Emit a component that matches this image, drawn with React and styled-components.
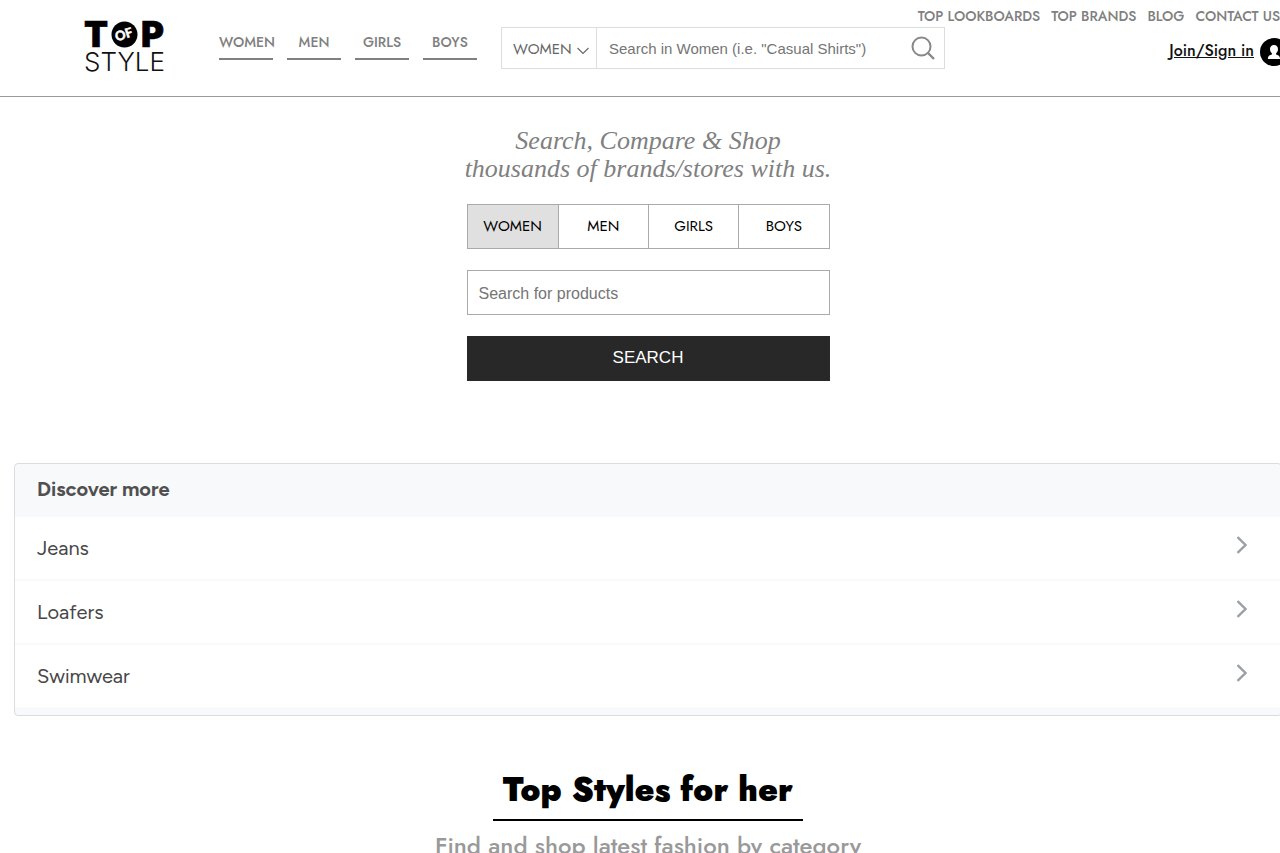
import React, { useState } from 'react';
import styled, { createGlobalStyle } from 'styled-components';

const JOST = '"Jost", Lato, sans-serif';
const ARIAL = 'Arial, "Liberation Sans", sans-serif';

const GlobalStyle = createGlobalStyle`
  * {
    box-sizing: border-box;
  }
  body {
    margin: 0;
    background: #fff;
    overflow-x: hidden;
  }
  input::placeholder {
    color: #757575;
    opacity: 1;
  }
`
// the page is 16px wider than the window
const Page = styled.div`
  width: calc(100% + 16px);
  font-family: ${JOST};
`
const Header = styled.header`
  display: grid;
  grid-template-columns: 84px 1fr;
  grid-template-rows: 27px 69px;
  column-gap: 52px;
  padding: 0 8px 0 83px;
  border-bottom: 1px solid #999;
`
const LogoLink = styled.a`
  grid-row: 1 / 3;
  padding-top: 12px;
`
const LogoSvg = styled.svg`
  display: block;
  width: 84px;
  height: 70px;
`
const TopLinks = styled.nav`
  display: flex;
  justify-content: flex-end;
  gap: 11px;
  padding: 6px 8px 0 0;
`
const TopLink = styled.a`
  color: #808080;
  font-size: 14px;
  font-weight: 500;
  line-height: 20px;
  text-decoration: none;
  white-space: nowrap;
`
const Bar = styled.div`
  display: flex;
  align-items: flex-start;
`
const MainNav = styled.nav`
  display: flex;
  gap: 14px;
  margin-right: 24px;
`
const NavLink = styled.a`
  width: 54px;
  border-bottom: 2px solid #808080;
  color: #808080;
  font-size: 14px;
  font-weight: 500;
  line-height: 31px;
  text-align: center;
  text-decoration: none;
`
const SearchBox = styled.form`
  display: flex;
  flex: 0 1 444px;
  height: 42px;
  border: 1px solid #ddd;
`
const Department = styled.label`
  position: relative;
  flex: none;
  width: 95px;
  border-right: 1px solid #ddd;
  svg {
    position: absolute;
    right: 7px;
    top: 19px;
    pointer-events: none;
  }
`
const DepartmentSelect = styled.select`
  width: 100%;
  height: 100%;
  padding: 2px 0 0 11px;
  border: 0;
  appearance: none;
  background: transparent;
  color: #666;
  font-family: ${JOST};
  font-size: 15px;
`
const SearchInput = styled.input`
  flex: 1;
  min-width: 0;
  padding: 0 12px;
  border: 0;
  background: transparent;
  font-family: ${ARIAL};
  font-size: 15px;
`
const SearchIcon = styled.button`
  padding: 0 9px 0 0;
  border: 0;
  background: transparent;
  svg {
    display: block;
  }
`
const Account = styled.div`
  display: flex;
  align-items: flex-start;
  gap: 6px;
  margin: 11px 0 0 auto;
`
const JoinLink = styled.a`
  color: #111;
  font-size: 16px;
  font-weight: 500;
  line-height: 26px;
  white-space: nowrap;
`
const Hero = styled.section`
  display: flex;
  flex-direction: column;
  align-items: center;
  padding: 30px 0 82px;
`
const Slogan = styled.h1`
  margin: 0 0 21px;
  color: #808080;
  font-family: "Liberation Serif", serif;
  font-size: 26px;
  font-style: italic;
  font-weight: 400;
  line-height: 28px;
  text-align: center;
`
const HeroForm = styled.form`
  display: grid;
  gap: 21px;
  width: 363px;
`
const Tabs = styled.div`
  display: grid;
  grid-template-columns: repeat(4, 1fr);
  height: 45px;
  border: 1px solid #aaa;
`
const Tab = styled.button`
  padding: 0 0 2px;
  border: 0;
  border-left: ${props => props.$first ? '0' : '1px solid #aaa'};
  background: ${props => props.$active ? '#e0e0e0' : '#fff'};
  color: #000;
  font-family: ${JOST};
  font-size: 15px;
`
const ProductInput = styled.input`
  height: 45px;
  padding: 2px 11px 0;
  border: 1px solid #aaa;
  font-family: ${ARIAL};
  font-size: 16px;
`
const SubmitButton = styled.button`
  height: 45px;
  padding: 0 0 2px;
  border: 0;
  background: #282828;
  color: #fff;
  font-family: ${ARIAL};
  font-size: 17px;
`
const Discover = styled.section`
  margin: 0 14px;
  padding-bottom: 6px;
  border: 1px solid #dadce0;
  border-radius: 4px;
  background: #f8f9fb;
  font-family: "Google Sans", "Product Sans", Figtree, Roboto, sans-serif;
`
const DiscoverTitle = styled.h2`
  margin: 0;
  padding: 0 22px;
  color: #505050;
  font-size: 20px;
  font-weight: 700;
  line-height: 51px;
  height: 53px;
`
const DiscoverRow = styled.a`
  display: flex;
  align-items: center;
  justify-content: space-between;
  height: 64px;
  padding: 0 32px 0 22px;
  border-bottom: 2px solid #f8f9fb;
  background: #fff;
  color: #474747;
  font-size: 20px;
  text-decoration: none;
  svg {
    margin-bottom: 6px;
  }
`
const Styles = styled.section`
  display: flex;
  flex-direction: column;
  align-items: center;
  padding: 50px 0 40px;
`
const StylesTitle = styled.h2`
  margin: 0 0 6px;
  padding: 0 10px 5px;
  border-bottom: 2px solid #000;
  font-size: 33px;
  font-weight: 900;
  line-height: 48px;
`
const StylesText = styled.p`
  margin: 0;
  color: #999;
  font-size: 24px;
  font-weight: 500;
  line-height: 38px;
`

const departments = ['WOMEN', 'MEN', 'GIRLS', 'BOYS'];
const topLinks = ['TOP LOOKBOARDS', 'TOP BRANDS', 'BLOG', 'CONTACT US'];
const topics = ['Jeans', 'Loafers', 'Swimwear'];

function Logo() {
  return (
    <LogoSvg viewBox="-2 -9 84 70" role="img" aria-label="Top of Style">
      <g fontFamily="Inter, sans-serif">
        <text x="-1" y="26" fontSize="35" fontWeight="900" stroke="#000" strokeWidth=".6">T</text>
        <text x="56" y="26" fontSize="35" fontWeight="900" stroke="#000" strokeWidth=".6">P</text>
        <circle cx="39.500" cy="13.500" r="13" fill="#000" />
        <text x="39" y="18" fontFamily="Lato, sans-serif" fontSize="13" fontWeight="900" fill="#fff" stroke="#fff" strokeWidth=".4" textAnchor="middle" transform="rotate(-18 39 14)">OF</text>
        <text x="-1" y="50" fontSize="26" fontWeight="300" fill="#111">STYLE</text>
      </g>
    </LogoSvg>
  )
}

function Chevron() {
  return (
    <svg width="14" height="18" viewBox="0 0 14 18" fill="none" stroke="#9aa0a6" strokeWidth="2.4">
      <path d="M2.500 1.200L10.500 9L2.500 16.800" />
    </svg>
  )
}

function HeaderSearch() {
  return (
    <SearchBox onSubmit={e => e.preventDefault()}>
      <Department>
        <DepartmentSelect aria-label="Department">
          {departments.map(name => <option key={name}>{name}</option>)}
        </DepartmentSelect>
        <svg width="12" height="8" viewBox="0 0 12 8" fill="none" stroke="#666" strokeWidth="1.1">
          <path d="M.5 1L6 6.500L11.500 1" />
        </svg>
      </Department>
      <SearchInput aria-label="Search in Women" placeholder={'Search in Women (i.e. "Casual Shirts")'} />
      <SearchIcon aria-label="Search">
        <svg width="24" height="24" viewBox="0 0 24 24" fill="none" stroke="#888" strokeWidth="2">
          <circle cx="10.500" cy="10.500" r="9" />
          <path d="M17 17L23 23" strokeWidth="2.400" />
        </svg>
      </SearchIcon>
    </SearchBox>
  )
}

function App() {
  const [active, setActive] = useState('WOMEN');
  return (
    <Page>
      <GlobalStyle />
      <Header>
        <LogoLink href="#"><Logo /></LogoLink>
        <TopLinks>
          {topLinks.map(name => <TopLink href="#" key={name}>{name}</TopLink>)}
        </TopLinks>
        <Bar>
          <MainNav>
            {departments.map(name => <NavLink href="#" key={name}>{name}</NavLink>)}
          </MainNav>
          <HeaderSearch />
          <Account>
            <JoinLink href="#">Join/Sign in</JoinLink>
            <svg width="28" height="28" viewBox="0 0 28 28">
              <circle cx="14" cy="14" r="14" fill="#000" />
              <path d="M14 7c-2.600 0-4 2-4 4.200 0 1.700.8 3.200 1.900 4v1.300c-2 .6-4 1.400-4 4.500h12.200c0-3.100-2-3.900-4-4.500v-1.300c1.100-.8 1.900-2.300 1.900-4C18 9 16.600 7 14 7z" fill="#fff" />
            </svg>
          </Account>
        </Bar>
      </Header>
      <Hero>
        <Slogan>Search, Compare &amp; Shop<br />thousands of brands/stores with us.</Slogan>
        <HeroForm onSubmit={e => e.preventDefault()}>
          <Tabs>
            {departments.map((name, i) => (
              <Tab type="button" key={name} $first={i === 0} $active={name === active} onClick={() => setActive(name)}>{name}</Tab>
            ))}
          </Tabs>
          <ProductInput aria-label="Search for products" placeholder="Search for products" />
          <SubmitButton>SEARCH</SubmitButton>
        </HeroForm>
      </Hero>
      <Discover>
        <DiscoverTitle>Discover more</DiscoverTitle>
        {topics.map(name => <DiscoverRow href="#" key={name}>{name}<Chevron /></DiscoverRow>)}
      </Discover>
      <Styles>
        <StylesTitle>Top Styles for her</StylesTitle>
        <StylesText>Find and shop latest fashion by category</StylesText>
      </Styles>
    </Page>
  )
}

export default App;
